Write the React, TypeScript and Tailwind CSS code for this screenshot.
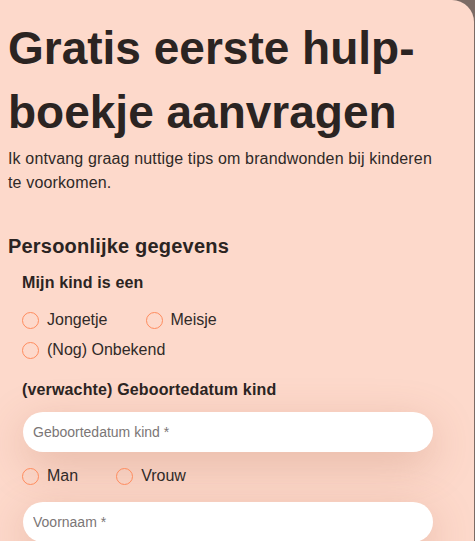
import React from 'react';

const font = { fontFamily: '"Liberation Sans", Arial, sans-serif' };

function Radio({ name, label }: { name: string; label: string }) {
  return (
    <label className="flex items-center gap-[8px] h-[24px] cursor-pointer">
      <input
        type="radio"
        name={name}
        className="appearance-none w-[17px] h-[17px] rounded-full border-[1.5px] border-[#ff8c5e] bg-transparent m-0"
      />
      <span className="text-[16px] leading-[24px] text-[#302a28]">{label}</span>
    </label>
  );
}

function Field({ placeholder }: { placeholder: string }) {
  return (
    <input
      type="text"
      placeholder={placeholder}
      className="block w-[410px] h-[40px] rounded-full bg-white px-[10px] text-[14px] text-[#302a28] placeholder-[#7b7676] outline-none shadow-[0_12px_44px_rgba(170,95,65,0.28)]"
    />
  );
}

export default function App() {
  return (
    <div className="min-h-[541px] bg-[#7b6b65] flex" style={font}>
      <div className="w-[474px] min-h-[541px] bg-[#fdd9cb] rounded-tr-[22px] overflow-hidden">
        <h1 className="pt-[16px] pl-[8px] text-[46px] leading-[64px] font-bold text-[#2b2422]">
          Gratis eerste hulp-
          <br />
          boekje aanvragen
        </h1>
        <p className="mt-[3px] pl-[8px] pr-[34px] text-[16px] leading-[24px] tracking-[0.15px] text-[#2f2927]">
          Ik ontvang graag nuttige tips om brandwonden bij kinderen te voorkomen.
        </p>

        <h2 className="mt-[37px] pl-[8px] text-[20px] leading-[28px] font-bold tracking-[0.2px] text-[#2b2422]">
          Persoonlijke gegevens
        </h2>

        <div className="pl-[22px]">
          <div className="mt-[11px] text-[16px] leading-[24px] font-bold tracking-[0.15px] text-[#2b2422]">
            Mijn kind is een
          </div>
          <div className="mt-[13px] flex flex-col gap-[6px]">
            <div className="flex gap-x-[38px]">
              <Radio name="kind" label="Jongetje" />
              <Radio name="kind" label="Meisje" />
            </div>
            <div className="flex">
              <Radio name="kind" label="(Nog) Onbekend" />
            </div>
          </div>

          <div className="mt-[16px] text-[16px] leading-[24px] font-bold tracking-[0.15px] text-[#2b2422]">
            (verwachte) Geboortedatum kind
          </div>
          <div className="mt-[10px] ml-[1px]">
            <Field placeholder="Geboortedatum kind *" />
          </div>

          <div className="mt-[12px] flex gap-x-[38px]">
            <Radio name="geslacht" label="Man" />
            <Radio name="geslacht" label="Vrouw" />
          </div>

          <div className="mt-[14px] ml-[1px] pb-[20px]">
            <Field placeholder="Voornaam *" />
          </div>
        </div>
      </div>
    </div>
  );
}
